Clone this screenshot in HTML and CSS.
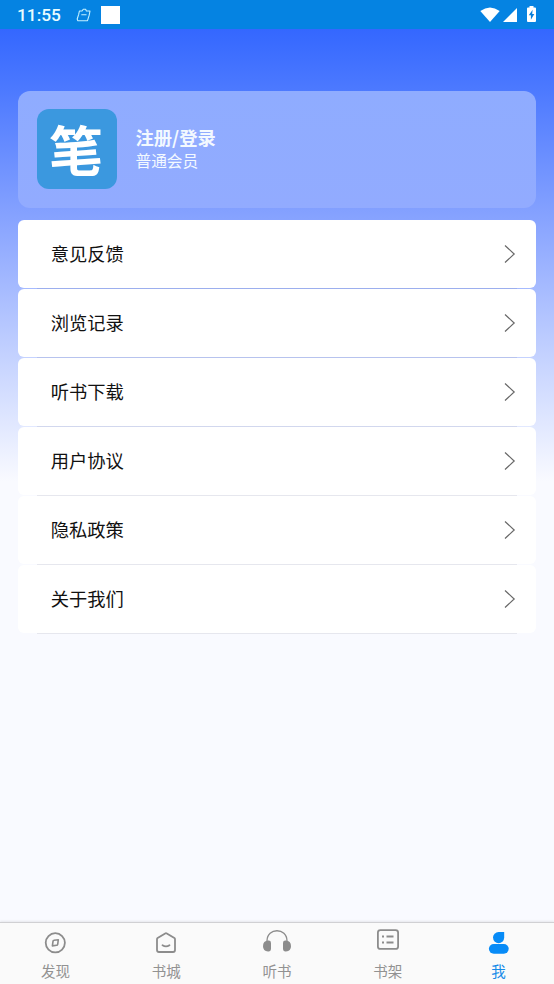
FILE: index.html
```
<!DOCTYPE html>
<html lang="zh-CN">
<head>
<meta charset="utf-8">
<title>我</title>
<link rel="stylesheet" href="styles.css">
</head>
<body>
<div class="app">
  <header class="status">
    <span class="time">11:55</span>
    <svg class="notice" width="16" height="16" viewBox="0 0 16 16" fill="none" stroke="#c5f1ff" stroke-width="1.1" stroke-linejoin="round"><path d="M2.6 7.6 3.4 4H6L7.3 2.2H9.6L10.4 4H14L13.2 8.2 11.5 13.7H1.7L1.2 12 2.6 7.6M5.3 7.7H10.5"/></svg>
    <span class="square"></span>
    <svg class="wifi" width="20" height="15" viewBox="0 0 20 15" fill="#fff"><path d="M.3 4Q10-3.2 19.7 4L10 15Z"/></svg>
    <svg class="signal" width="14" height="14" viewBox="0 0 14 14" fill="#fff"><path d="M14 0V14H0Z"/></svg>
    <svg class="battery" width="9" height="16" viewBox="0 0 9 16"><path fill="#fff" d="M2.5 0h4v1.6H8q1 0 1 1V15q0 1-1 1H1q-1 0-1-1V2.6q0-1 1-1h1.5Z"/><path fill="#087fdc" d="M5.6 3.7 1.8 9.2h2.1v4.5L7.3 8H5.2Z"/></svg>
  </header>
  <main class="page">
    <section class="profile">
      <div class="avatar">笔</div>
      <div class="who">
        <div class="login">注册/登录</div>
        <div class="level">普通会员</div>
      </div>
    </section>
    <ul class="menu">
      <li class="row"><span>意见反馈</span><svg class="arrow" viewBox="0 0 12 20"><path d="M1 1.5 10.2 10 1 18.5"/></svg></li>
      <li class="row"><span>浏览记录</span><svg class="arrow" viewBox="0 0 12 20"><path d="M1 1.5 10.2 10 1 18.5"/></svg></li>
      <li class="row"><span>听书下载</span><svg class="arrow" viewBox="0 0 12 20"><path d="M1 1.5 10.2 10 1 18.5"/></svg></li>
      <li class="row"><span>用户协议</span><svg class="arrow" viewBox="0 0 12 20"><path d="M1 1.5 10.2 10 1 18.5"/></svg></li>
      <li class="row"><span>隐私政策</span><svg class="arrow" viewBox="0 0 12 20"><path d="M1 1.5 10.2 10 1 18.5"/></svg></li>
      <li class="row"><span>关于我们</span><svg class="arrow" viewBox="0 0 12 20"><path d="M1 1.5 10.2 10 1 18.5"/></svg></li>
    </ul>
  </main>
  <nav class="tabs">
    <a class="tab">
      <svg width="30" height="32" viewBox="0 0 30 32" fill="none" stroke="#8c8c8c" stroke-width="1.8"><circle cx="15.3" cy="15.8" r="9.6"/><path stroke-width="1.6" stroke-linejoin="round" d="M14 13.3 18.3 12.7 17.7 17.3Q17.5 18.2 16.6 18.3L12.4 18.9 13 14.3Q13.1 13.4 14 13.3Z"/></svg>
      <span>发现</span>
    </a>
    <a class="tab">
      <svg width="30" height="32" viewBox="0 0 30 32" fill="none" stroke="#8c8c8c" stroke-width="1.8" stroke-linejoin="round" stroke-linecap="round"><path d="M6 12.2Q6 11.5 6.6 11.1L14.2 6.4Q15 5.9 15.8 6.4L23.4 11.1Q24 11.5 24 12.2V23Q24 25 22 25H8Q6 25 6 23Z"/><path d="M11.5 18.2Q15 20.5 18.5 18.2"/></svg>
      <span>书城</span>
    </a>
    <a class="tab">
      <svg width="30" height="32" viewBox="0 0 30 32"><path d="M5 16V14C5 .3 25 .3 25 14V16" fill="none" stroke="#8c8c8c" stroke-width="1.3"/><path fill="#8c8c8c" d="M6.3 13.6Q9 13.4 9 16V21.5Q9 24.8 6 24.5Q1 24.2 1 19.2 1 14 6.3 13.6ZM23.7 13.6Q21 13.4 21 16V21.5Q21 24.8 24 24.5Q29 24.2 29 19.2 29 14 23.7 13.6Z"/></svg>
      <span>听书</span>
    </a>
    <a class="tab">
      <svg width="30" height="32" viewBox="0 0 30 32" fill="none" stroke="#8c8c8c" stroke-width="1.8"><rect x="4.9" y="3.1" width="20.2" height="18.8" rx="2.5"/><path d="M9 9.5h2M13.5 9.5h7M9 15.5h2M13.5 15.5h7"/></svg>
      <span>书架</span>
    </a>
    <a class="tab active">
      <svg width="30" height="32" viewBox="0 0 30 32" fill="#078bf7"><path d="M20.2 5V10.600A5.600 5.600 0 1 1 14.600 5Z"/><rect x="4.900" y="17" width="19.800" height="9.700" rx="4.850"/></svg>
      <span>我</span>
    </a>
  </nav>
</div>
</body>
</html>
```

FILE: styles.css
```
* { box-sizing: border-box; }
body {
  margin: 0;
  font-family: "Noto Sans CJK SC", sans-serif;
}
.app {
  display: flex;
  flex-direction: column;
  height: 984px;
  background: #f9faff;
}
.status {
  display: flex;
  align-items: center;
  height: 29px;
  padding: 0 18px 0 17px;
  background: #0583e2;
}
.time {
  width: 59px;
  padding-top: 2px;
  color: #e9fcff;
  font: 500 17.3px/29px Roboto, sans-serif;
}
.square {
  width: 19px;
  height: 18px;
  margin-left: 9px;
  background: #fff;
}
.wifi { margin-left: auto; }
.signal { margin: 1px 10px 0 3px; }
.battery { margin-bottom: 1px; }
.page {
  flex: 1;
  padding: 62px 18px 0;
  background: linear-gradient(#3467ff 0, #4c79ff 60px, #87a3ff 190px, #c3d1ff 325px, #f9faff 452px);
}
.profile {
  display: flex;
  align-items: center;
  height: 117px;
  margin-bottom: 12px;
  padding: 0 19px 1px;
  border-radius: 12px;
  background: linear-gradient(#8facff, #92abff);
}
.avatar {
  width: 80px;
  height: 80px;
  margin-right: 18.5px;
  padding-right: 2px;
  border-radius: 12px;
  background: #3b98df;
  color: #fff;
  font-size: 54px;
  font-weight: 700;
  line-height: 79px;
  text-align: center;
}
.who {
  padding-bottom: 3px;
  color: #f3f9ff;
}
.login {
  font-size: 18.3px;
  font-weight: 700;
  line-height: 26px;
}
.level {
  font-size: 15.7px;
  line-height: 22px;
}
.menu {
  margin: 0;
  padding: 0;
  list-style: none;
}
.row {
  position: relative;
  display: flex;
  align-items: center;
  justify-content: space-between;
  height: 68px;
  margin-bottom: 1px;
  padding: 0 20px 0 32.7px;
  border-radius: 6px;
  background: #fff;
  color: #111;
  font-size: 18.3px;
  line-height: 28px;
}
.row span { padding-bottom: 2px; }
.row::after {
  content: "";
  position: absolute;
  right: 19px;
  bottom: -1px;
  left: 19px;
  height: 1px;
  background: rgba(70, 70, 85, .1);
}
.arrow {
  width: 12px;
  height: 20px;
  fill: none;
  stroke: #686868;
  stroke-width: 1.2;
}
.tabs {
  position: relative;
  display: grid;
  grid-template-columns: repeat(5, 1fr);
  height: 62px;
  border-top: 1px solid #d0d0d3;
  background: #fafafa;
  box-shadow: 0 -1px 2px rgba(0, 0, 0, .08);
}
.tab {
  display: flex;
  flex-direction: column;
  align-items: center;
  padding-top: 4px;
  color: #929292;
  font-size: 14.5px;
  line-height: 22px;
}
.tab svg { flex: none; margin-bottom: 1px; }
.tab.active { color: #168be8; }
```
